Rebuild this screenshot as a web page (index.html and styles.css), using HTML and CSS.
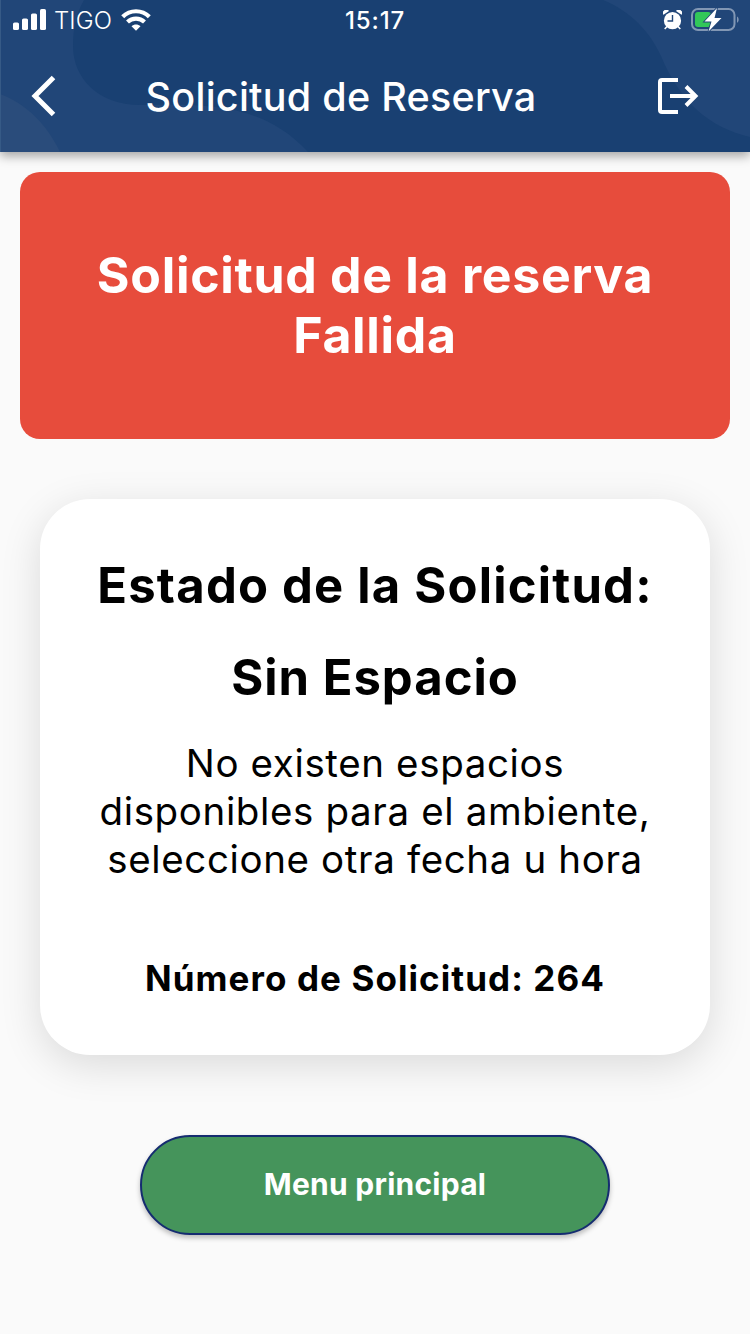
FILE: index.html
```html
<!DOCTYPE html>
<html lang="es">
<head>
<meta charset="utf-8">
<title>Solicitud de Reserva</title>
<link rel="stylesheet" href="styles.css">
</head>
<body>
<header class="header">
  <svg class="header-art" width="750" height="152" viewBox="0 0 750 152">
    <path class="wave" d="M0 0H84C76 14 73 29 73 46C73 78 98 105 140 105C200 105 260 100 308 152H0Z"/>
    <path class="wave-light" d="M0 94C27 104 47 125 60 152H0Z"/>
    <path class="wave" d="M603 0C632 12 650 32 661 56C680 102 710 128 750 137V0Z"/>
    <path class="edge" d="M0 0H1V152H0Z"/>
  </svg>
  <div class="status">
    <div class="status-left">
      <svg width="34" height="22" viewBox="0 0 34 22" fill="#fff">
        <rect x="0" y="13.500" width="6" height="7.500" rx="1.6"/>
        <rect x="9" y="9.500" width="6" height="11.500" rx="1.6"/>
        <rect x="18" y="4.500" width="6" height="16.500" rx="1.6"/>
        <rect x="27" y="0" width="6" height="21" rx="1.6"/>
      </svg>
      <span class="carrier">TIGO</span>
      <svg width="30" height="22" viewBox="0 0 30 22" fill="none" stroke="#fff" stroke-width="4.200">
        <path d="M1.700 7.800C9 .4 21 .4 28.300 7.800"/>
        <path d="M6.500 13C11.200 8.500 18.800 8.500 23.500 13"/>
        <path d="M10.500 17.200C13 14.900 17 14.900 19.500 17.200L15 21.700Z" fill="#fff" stroke="none"/>
      </svg>
    </div>
    <span class="clock">15:17</span>
    <div class="status-right">
      <svg width="19" height="21" viewBox="0 0 19 21">
        <circle cx="9.500" cy="10.700" r="8.600" fill="#fff"/>
        <path d="M.5 4.800A3.200 3.200 0 0 1 6 1ZM18.500 4.800A3.200 3.200 0 0 0 13 1Z" fill="#fff"/>
        <path d="M4 16.500L1.700 19M15 16.500L17.300 19" stroke="#fff" stroke-width="1.600"/>
        <path d="M9.500 5V11H4.500" fill="none" stroke="#214678" stroke-width="1.400"/>
      </svg>
      <svg width="48" height="24" viewBox="0 0 48 24">
        <rect x="1" y="1" width="42.500" height="21" rx="6" fill="none" stroke="#8297b4" stroke-width="2"/>
        <path d="M46 8.500C48.200 9.800 48.200 13.500 46 14.800Z" fill="#8297b4"/>
        <rect x="4" y="4" width="16" height="15" rx="3" fill="#32c759"/>
        <path d="M26 0L13.500 13.500H20.500L17.500 23.500L30.500 10H23.500Z" fill="#fff" stroke="#214678" stroke-width="1.800" paint-order="stroke"/>
      </svg>
    </div>
  </div>
  <div class="bar">
    <svg width="26" height="42" viewBox="0 0 26 42" fill="none" stroke="#fff" stroke-width="5"><path d="M22.500 2.500L4 21L22.500 39.500"/></svg>
    <h1 class="title">Solicitud de Reserva</h1>
    <svg width="42" height="38" viewBox="0 0 42 38" fill="none" stroke="#fff" stroke-width="4">
      <path d="M21 3H5Q3 3 3 5V33Q3 35 5 35H21"/>
      <path d="M13 19H38M29 9.500L38.500 19L29 28.500"/>
    </svg>
  </div>
</header>
<main class="content">
  <section class="alert"><span>Solicitud de la reserva</span><span>Fallida</span></section>
  <section class="card">
    <h2 class="heading">Estado de la Solicitud:</h2>
    <h2 class="heading state">Sin Espacio</h2>
    <p class="message">No existen espacios<br>disponibles para el ambiente,<br>seleccione otra fecha u hora</p>
    <p class="number">Número de Solicitud: 264</p>
  </section>
  <button class="button">Menu principal</button>
</main>
</body>
</html>
```
FILE: styles.css
```css
* { box-sizing: border-box; }
body { margin: 0; height: 1334px; background: #fafafa; color: #000; font-family: Inter, "Liberation Sans", sans-serif; white-space: nowrap; overflow: hidden; }
svg { display: block; flex: none; }
h1, h2, p { margin: 0; }
.header { position: relative; height: 152px; background: #194072; color: #fff; box-shadow: 0 4px 10px rgba(0,0,0,.35); }
.header-art { position: absolute; inset: 0; }
.wave { fill: #214678; }
.wave-light { fill: #2a4c7b; }
.edge { fill: #365a86; }
.status { position: relative; height: 40px; padding: 0 11px 0 13px; display: grid; grid-template-columns: 1fr auto 1fr; align-items: center; }
.status-left, .status-right { display: flex; align-items: center; }
.status-left { gap: 9px; }
.status-right { justify-content: flex-end; gap: 9px; }
.carrier { margin-left: -2px; font-size: 24px; font-weight: 300; letter-spacing: .1px; }
.clock { margin-right: 2px; font-size: 24px; font-weight: 500; letter-spacing: .9px; }
.bar { position: relative; height: 112px; padding: 0 51px 0 31px; display: grid; grid-template-columns: 26px 1fr 42px; align-items: center; }
.title { padding: 1px 32px 0 0; text-align: center; font-size: 39.500px; line-height: 48px; font-weight: 550; letter-spacing: .25px; }
.content { padding: 20px 20px 0; display: flex; flex-direction: column; align-items: center; }
.alert { width: 710px; height: 266.500px; padding-bottom: 1px; border-radius: 20px; background: #e74c3c; color: #fff; display: flex; flex-direction: column; align-items: center; justify-content: center; font-size: 50px; line-height: 60px; font-weight: 700; letter-spacing: .7px; }
.card { width: 670px; height: 555.500px; margin-top: 60.500px; padding-top: 57px; border-radius: 50px; background: #fff; box-shadow: 0 10px 40px rgba(0,0,0,.13); text-align: center; }
.heading { font-size: 49px; line-height: 60px; font-weight: 700; letter-spacing: 1.200px; }
.state { margin-top: 32px; letter-spacing: 1px; }
.message { margin-top: 31px; font-size: 38.500px; line-height: 48px; letter-spacing: .63px; }
.number { margin-top: 73px; font-size: 35px; line-height: 44px; font-weight: 700; letter-spacing: 1.080px; }
.button { width: 470px; height: 100px; margin-top: 80.500px; padding: 0 0 2px; border: 2px solid #152c70; border-radius: 50px; background: #45945b; color: #fff; font: 700 30px/36px Inter, "Liberation Sans", sans-serif; letter-spacing: .25px; box-shadow: 0 3px 5px rgba(0,0,0,.25); }
```
